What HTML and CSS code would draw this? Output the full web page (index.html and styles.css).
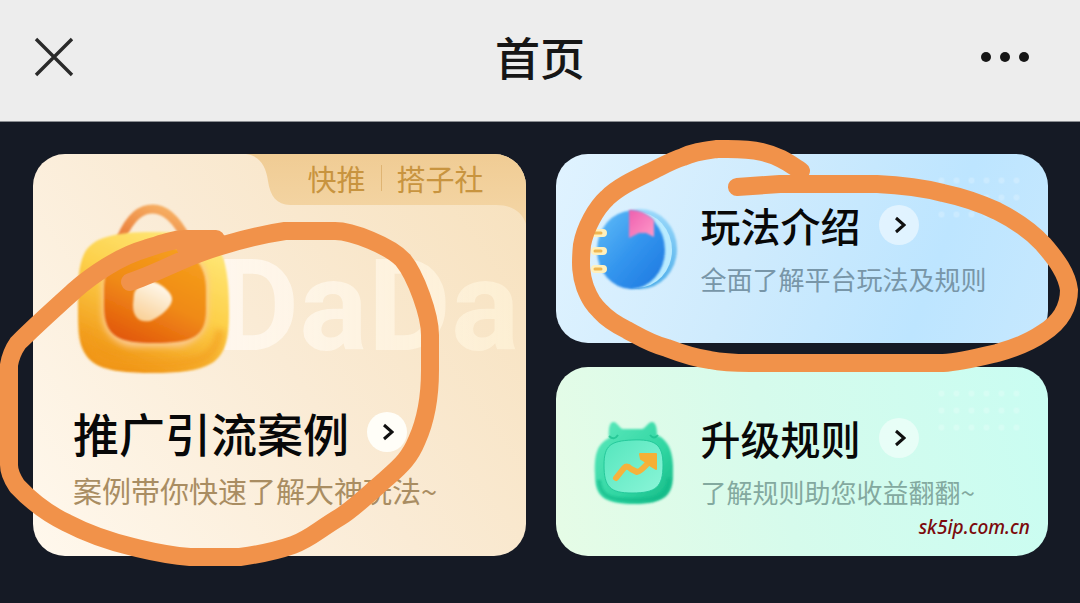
FILE: index.html
```html
<!DOCTYPE html>
<html lang="zh-CN">
<head>
    <meta charset="UTF-8">
    <meta name="viewport" content="width=device-width, initial-scale=1.0">
    <title>首页</title>
    <link rel="stylesheet" href="styles.css">
</head>
<body>
    <div class="page">
        <!-- 顶部导航 -->
        <header class="nav-bar">
            <button class="nav-btn" type="button" aria-label="关闭">
                <svg width="40" height="40" viewBox="0 0 40 40"><path d="M2 2L38 38M38 2L2 38" stroke="#2a2a2a" stroke-width="3.4" fill="none"/></svg>
            </button>
            <h1 class="nav-title">首页</h1>
            <button class="nav-btn nav-more" type="button" aria-label="更多">
                <svg width="50" height="12" viewBox="0 0 50 12" fill="#161616"><circle cx="6" cy="6" r="5"/><circle cx="25" cy="6" r="5"/><circle cx="44" cy="6" r="5"/></svg>
            </button>
        </header>

        <main class="cards">
            <!-- 推广案例 -->
            <a class="card card-case" href="#case">
                <div class="tag">
                    <svg class="tag-bg" width="280" height="70" viewBox="0 0 280 70">
                        <defs>
                            <linearGradient id="tagFill" x1="0" y1="0" x2="0" y2="1">
                                <stop offset="0" stop-color="#f0cc94"/>
                                <stop offset="1" stop-color="#f4d6a6"/>
                            </linearGradient>
                        </defs>
                        <path d="M0 0C14 2 20 12 22 27C24 42 31 51 44 51H250C266 51 276 58 280 70V0Z" fill="url(#tagFill)"/>
                    </svg>
                    <span>快推</span>
                    <i class="tag-line"></i>
                    <span>搭子社</span>
                </div>
                <div class="hero">
                    <svg class="bag" width="176" height="184" viewBox="66 200 176 184">
                        <defs>
                            <linearGradient id="bagBody" x1="0.9" y1="0" x2="0.4" y2="1">
                                <stop offset="0" stop-color="#ffec80"/>
                                <stop offset="0.5" stop-color="#fdd04a"/>
                                <stop offset="1" stop-color="#f09516"/>
                            </linearGradient>
                            <linearGradient id="bagInner" x1="0.8" y1="0" x2="0.3" y2="1">
                                <stop offset="0" stop-color="#f6a01c"/>
                                <stop offset="0.55" stop-color="#f08a16"/>
                                <stop offset="1" stop-color="#e25a0c"/>
                            </linearGradient>
                            <linearGradient id="bagHandle" x1="0" y1="1" x2="1" y2="0">
                                <stop offset="0" stop-color="#ea7c3a"/>
                                <stop offset="1" stop-color="#f8b668"/>
                            </linearGradient>
                            <linearGradient id="bagPlay" x1="0.7" y1="0" x2="0.2" y2="1">
                                <stop offset="0" stop-color="#fffaf0"/>
                                <stop offset="1" stop-color="#f9cf94"/>
                            </linearGradient>
                            <filter id="soft1" x="-20%" y="-20%" width="140%" height="140%"><feGaussianBlur stdDeviation="1.2"/></filter>
                            <filter id="soft3" x="-20%" y="-20%" width="140%" height="140%"><feGaussianBlur stdDeviation="3"/></filter>
                        </defs>
                        <path d="M121 238C131 216 141 209 153 209C165 209 176 219 186 238" fill="none" stroke="url(#bagHandle)" stroke-width="9" filter="url(#soft1)"/>
                        <path d="M153 232C190 232 213 236 221 253C228 268 229 290 229 312C229 337 226 354 212 363C198 371 178 373 153 373C128 373 106 371 94 363C80 353 78 337 78 312C78 290 77 269 84 254C92 237 116 232 153 232Z" fill="url(#bagBody)" filter="url(#soft1)"/>
                        <path d="M86 330C88 358 104 364 153 365C202 364 216 358 220 330" fill="none" stroke="#f39c1c" stroke-width="9" opacity="0.6" filter="url(#soft3)"/>
                        <rect x="102" y="250" width="106" height="97" rx="33" fill="#fcc98e" filter="url(#soft3)"/>
                        <path d="M154 246C183 246 206 256 206 290V310C206 338 191 343 154 343C120 343 104 338 104 306V290C104 258 122 246 154 246Z" fill="url(#bagInner)" filter="url(#soft1)"/>
                        <path d="M134 294C136 286 148 280 154 282C163 285 172 293 172 299C172 307 160 317 150 321C138 323 133 316 133 305Z" fill="url(#bagPlay)" filter="url(#soft1)"/>
                    </svg>
                    <span class="hero-word">DaDa</span>
                </div>
                <div class="card-head">
                    <h2 class="card-title title-big">推广引流案例</h2>
                    <span class="arrow arrow-solid"><svg width="12" height="18" viewBox="0 0 12 18"><path d="M2 2L10 9L2 16"/></svg></span>
                </div>
                <p class="card-desc desc-case">案例带你快速了解大神玩法~</p>
            </a>

            <div class="side">
                <!-- 玩法介绍 -->
                <a class="card card-small card-play" href="#play">
                    <svg class="small-icon" width="90" height="92" viewBox="590 202 90 92">
                        <defs>
                            <linearGradient id="bookFill" x1="0" y1="0" x2="1" y2="1">
                                <stop offset="0" stop-color="#62bdf8"/>
                                <stop offset="0.5" stop-color="#3395ee"/>
                                <stop offset="1" stop-color="#1c76df"/>
                            </linearGradient>
                            <linearGradient id="bookBack" x1="0" y1="0" x2="0" y2="1">
                                <stop offset="0" stop-color="#9bd9fb"/>
                                <stop offset="1" stop-color="#4dade9"/>
                            </linearGradient>
                            <linearGradient id="markFill" x1="0" y1="0" x2="1" y2="1">
                                <stop offset="0" stop-color="#ee5fae"/>
                                <stop offset="1" stop-color="#ff9aca"/>
                            </linearGradient>
                        </defs>
                        <ellipse cx="640" cy="248" rx="37" ry="40" fill="url(#bookBack)" filter="url(#soft1)"/>
                        <ellipse cx="637" cy="249" rx="35" ry="38" fill="#b9ebff"/>
                        <ellipse cx="631" cy="249" rx="34" ry="39" fill="url(#bookFill)" filter="url(#soft1)"/>
                        <path d="M629 209Q642 208 654 219V236L646 232L639 232L629 237Z" fill="url(#markFill)" filter="url(#soft1)"/>
                        <g stroke-linecap="round" fill="none">
                            <path d="M595 232H603M595 250H603M595 268H603" stroke="#fff0bd" stroke-width="8"/>
                            <path d="M595 232H601M595 250H601M595 268H601" stroke="#efb753" stroke-width="3"/>
                        </g>
                    </svg>
                    <div class="card-text">
                        <div class="card-head">
                            <h2 class="card-title">玩法介绍</h2>
                            <span class="arrow"><svg width="12" height="18" viewBox="0 0 12 18"><path d="M2 2L10 9L2 16"/></svg></span>
                        </div>
                        <p class="card-desc desc-play">全面了解平台玩法及规则</p>
                    </div>
                </a>

                <!-- 升级规则 -->
                <a class="card card-small card-level" href="#level">
                    <svg class="small-icon" width="90" height="92" viewBox="590 415 90 92">
                        <defs>
                            <linearGradient id="catFill" x1="0" y1="0" x2="1" y2="1">
                                <stop offset="0" stop-color="#5ee9bd"/>
                                <stop offset="0.6" stop-color="#30d6a2"/>
                                <stop offset="1" stop-color="#14b884"/>
                            </linearGradient>
                            <linearGradient id="catFace" x1="0" y1="0" x2="1" y2="1">
                                <stop offset="0" stop-color="#55e6bd"/>
                                <stop offset="1" stop-color="#8bf5d8"/>
                            </linearGradient>
                        </defs>
                        <path d="M609 437C608 427 610 420 614 421C618 422 619 427 623 428H642C646 427 648 421 652 421C656 421 657 428 657 434C670 440 674 454 673 474C673 493 666 503 634 503C602 503 595 494 595 474C594 454 597 443 609 437Z" fill="url(#catFill)" filter="url(#soft1)"/>
                        <path d="M599 479C600 495 609 499 634 499C659 499 668 495 669 477" fill="none" stroke="#10b887" stroke-width="4" opacity="0.6" filter="url(#soft1)"/>
                        <path d="M609 435Q614 440 618 434M650 434Q654 439 658 434" fill="none" stroke="#18bd8b" stroke-width="2" opacity="0.7"/>
                        <path d="M632 439C655 438 663 443 663 464C663 486 656 492 632 492C610 492 604 486 604 464C604 444 611 440 632 439Z" fill="url(#catFace)" stroke="#25c99b" stroke-width="1"/>
                        <path d="M616 477L624 467Q627 464 631 468L637 471Q640 471 649 461" fill="none" stroke="#f5b23c" stroke-width="6" stroke-linecap="round" stroke-linejoin="round"/>
                        <path d="M640 453L656 453L656 468L651 465L646 461L641 458Z" fill="#f5b035" stroke="#f5b035" stroke-width="2" stroke-linejoin="round"/>
                    </svg>
                    <div class="card-text">
                        <div class="card-head">
                            <h2 class="card-title">升级规则</h2>
                            <span class="arrow"><svg width="12" height="18" viewBox="0 0 12 18"><path d="M2 2L10 9L2 16"/></svg></span>
                        </div>
                        <p class="card-desc desc-level">了解规则助您收益翻翻~</p>
                    </div>
                    <span class="site-mark">sk5ip.com.cn</span>
                </a>
            </div>
        </main>

        <!-- 手绘圈注 -->
        <svg class="marker" viewBox="0 0 1080 603" aria-hidden="true">
            <path d="M130 282C150 276 178 261 200 253C225 244 258 235 285 231H335C352 231 390 246 403 260C416 276 430 315 430 335V370C430 398 426 420 417 440C410 457 402 465 387 478C370 493 352 510 340 517C318 530 310 539 293 545C276 551 262 554 240 557H190C165 555 150 551 133 547C108 541 88 534 67 523C48 514 32 502 17 486Q9 474 9 465V365Q11 353 18 343C36 325 55 308 75 290C92 275 120 256 145 249C160 244 170 240 185 239H216L186 249"/>
            <path d="M801 171C790 164 780 156 762 152C745 148 731 149 717 149C703 151 694 152 683 157C670 161 659 168 650 172C631 181 617 188 607 198C596 208 585 228 582 245C580 265 581 275 585 287C590 300 594 305 600 311C608 320 617 325 627 330C640 337 651 344 667 348C680 353 694 358 710 360C725 363 738 363 750 363H943C960 362 980 357 997 353C1015 348 1030 342 1043 333C1061 322 1069 306 1069 290C1067 274 1057 260 1043 244C1030 230 1015 220 997 211C980 203 962 197 943 193C920 187 900 185 877 184H780L737 187"/>
        </svg>
    </div>
</body>
</html>
```

FILE: styles.css
```css
* {
    box-sizing: border-box;
}

body {
    margin: 0;
    background-color: #151a25;
    font-family: "Noto Sans CJK SC", "Noto Sans", sans-serif;
}

.page {
    position: relative;
    min-height: 100vh;
    overflow: hidden;
}

/* 顶部导航 */
.nav-bar {
    display: grid;
    grid-template-columns: 1fr auto 1fr;
    align-items: center;
    height: 122px;
    padding: 0 34px 8px;
    background-color: #ededed;
    border-bottom: 1px solid #8a8d92;
}

.nav-btn {
    display: flex;
    justify-self: start;
    padding: 0;
    border: 0;
    background: none;
    cursor: pointer;
}

.nav-more {
    justify-self: end;
    margin-right: 16px;
}

.nav-title {
    margin: 0;
    color: #161616;
    font-size: 45px;
    font-weight: 500;
    line-height: 60px;
}

/* 卡片区域 */
.cards {
    display: grid;
    grid-template-columns: 1fr 1fr;
    gap: 30px;
    padding: 32px 32px 47px 33px;
}

.side {
    display: grid;
    grid-template-rows: 1fr 1fr;
    gap: 24px;
}

.card {
    position: relative;
    border-radius: 32px;
    color: #080808;
    text-decoration: none;
    overflow: hidden;
}

.card-case {
    display: flex;
    flex-direction: column;
    padding-bottom: 46px;
    background: linear-gradient(55deg, #fff8ed 0%, #faebd5 50%, #f7e1bd 100%);
}

/* 右上角标签 */
.tag {
    position: relative;
    align-self: flex-end;
    display: flex;
    align-items: center;
    gap: 15px;
    width: 280px;
    height: 46px;
    padding: 2px 0 0 62px;
    color: #c8943f;
    font-size: 29px;
    line-height: 40px;
}

.tag-bg {
    position: absolute;
    top: 0;
    right: 0;
}

.tag span {
    position: relative;
}

.tag-line {
    position: relative;
    width: 1px;
    height: 26px;
    background-color: #dfb473;
}

.hero {
    display: flex;
    align-items: center;
    height: 184px;
    margin-left: 33px;
    margin-bottom: 20px;
}

.bag {
    position: relative;
    z-index: 1;
    flex: none;
    margin-right: -26px;
}

.hero-word {
    padding-top: 28px;
    font-family: Roboto, sans-serif;
    font-size: 128px;
    font-weight: 700;
    line-height: 128px;
    background: linear-gradient(90deg, rgba(255, 248, 240, 0.9), rgba(255, 243, 216, 0.7));
    -webkit-background-clip: text;
    background-clip: text;
    color: transparent;
}

.card-head {
    display: flex;
    align-items: center;
    gap: 18px;
}

.card-case .card-head,
.card-case .card-desc {
    margin-left: 40px;
}

.card-title {
    margin: 0;
    font-size: 40px;
    font-weight: 500;
    line-height: 48px;
}

.title-big {
    font-size: 46px;
    line-height: 56px;
}

.card-desc {
    margin: 0;
    font-size: 26px;
    line-height: 36px;
    white-space: nowrap;
}

.desc-case {
    margin-top: 10px;
    color: #a98d62;
    font-size: 29px;
    line-height: 40px;
}

.arrow {
    display: flex;
    justify-content: center;
    align-items: center;
    width: 40px;
    height: 40px;
    padding-left: 2px;
    border-radius: 50%;
    background-color: rgba(255, 255, 255, 0.5);
}

.arrow-solid {
    background-color: #fffef8;
}

.arrow path {
    fill: none;
    stroke: #101010;
    stroke-width: 3;
}

/* 右侧小卡片 */
.card-small {
    display: flex;
    align-items: center;
    gap: 21px;
    padding: 0 20px 0 34px;
}

.small-icon {
    flex: none;
}

.card-text {
    display: flex;
    flex-direction: column;
    gap: 12px;
}

.card-play {
    background: linear-gradient(110deg, #e0f3ff 0%, #cfebfd 40%, #bde5ff 75%, #c6e8fe 100%);
}

.card-level {
    background: linear-gradient(75deg, #e6fce6 0%, #d6fbec 45%, #c9fdf2 100%);
}

/* 右上角点阵 */
.card-small::after {
    content: "";
    position: absolute;
    top: 18px;
    right: 24px;
    width: 90px;
    height: 51px;
    background: radial-gradient(circle, rgba(255, 255, 255, 0.2) 2px, transparent 4px);
    background-size: 15px 17px;
}

.desc-play {
    color: #7896a8;
}

.desc-level {
    color: #83a99f;
}

.site-mark {
    position: absolute;
    right: 18px;
    bottom: 15px;
    color: #7c0a0c;
    font-family: "Noto Sans", sans-serif;
    font-size: 19px;
    font-style: italic;
    font-weight: 500;
    line-height: 28px;
}

.marker {
    position: absolute;
    z-index: 2;
    top: 0;
    left: 0;
    width: 100%;
    height: auto;
    pointer-events: none;
}

.marker path {
    fill: none;
    stroke: #f1924a;
    stroke-width: 18;
    stroke-linecap: round;
    stroke-linejoin: round;
}
```
